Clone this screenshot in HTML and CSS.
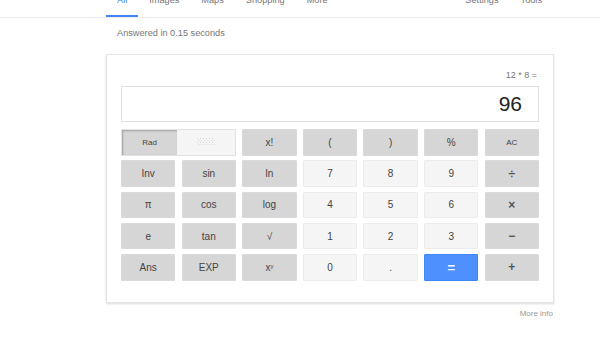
FILE: index.html
```html
<!DOCTYPE html>
<html lang="en">
<head>
  <meta charset="UTF-8" />
  <title>12 * 8 - Search</title>
  <link rel="stylesheet" href="styles.css">
</head>
<body>

<!-- Search tabs -->
<header class="tabs">
  <a class="tab active">All</a>
  <a class="tab">Images</a>
  <a class="tab">Maps</a>
  <a class="tab">Shopping</a>
  <a class="tab">More</a>
  <div class="tabs-right">
    <a class="tab">Settings</a>
    <a class="tab">Tools</a>
  </div>
</header>

<p class="answered">Answered in 0.15 seconds</p>

<!-- Calculator card -->
<div class="card">
  <div class="expr">12 * 8 =</div>
  <div class="display">96</div>

  <div class="keys">
    <div class="toggle">
      <div class="rad">Rad</div>
      <div class="deg">
        <svg width="18" height="8" viewBox="0 0 18 8">
          <g fill="#d4d4d4">
            <rect x="0" y="0" width="1" height="1"/><rect x="3" y="0" width="1" height="1"/><rect x="6" y="0" width="1" height="1"/><rect x="9" y="0" width="1" height="1"/><rect x="12" y="0" width="1" height="1"/><rect x="15" y="0" width="1" height="1"/>
            <rect x="1.5" y="2" width="1" height="1"/><rect x="4.5" y="2" width="1" height="1"/><rect x="7.5" y="2" width="1" height="1"/><rect x="10.5" y="2" width="1" height="1"/><rect x="13.5" y="2" width="1" height="1"/><rect x="16.5" y="2" width="1" height="1"/>
            <rect x="0" y="4" width="1" height="1"/><rect x="3" y="4" width="1" height="1"/><rect x="6" y="4" width="1" height="1"/><rect x="9" y="4" width="1" height="1"/><rect x="12" y="4" width="1" height="1"/><rect x="15" y="4" width="1" height="1"/>
            <rect x="1.5" y="6" width="1" height="1"/><rect x="4.5" y="6" width="1" height="1"/><rect x="7.5" y="6" width="1" height="1"/><rect x="10.5" y="6" width="1" height="1"/><rect x="13.5" y="6" width="1" height="1"/><rect x="16.5" y="6" width="1" height="1"/>
          </g>
        </svg>
      </div>
    </div>
    <div class="key fn">x!</div>
    <div class="key fn">(</div>
    <div class="key fn">)</div>
    <div class="key fn">%</div>
    <div class="key fn small">AC</div>

    <div class="key fn">Inv</div>
    <div class="key fn">sin</div>
    <div class="key fn">ln</div>
    <div class="key num">7</div>
    <div class="key num">8</div>
    <div class="key num">9</div>
    <div class="key fn op">÷</div>

    <div class="key fn">π</div>
    <div class="key fn">cos</div>
    <div class="key fn">log</div>
    <div class="key num">4</div>
    <div class="key num">5</div>
    <div class="key num">6</div>
    <div class="key fn op">×</div>

    <div class="key fn">e</div>
    <div class="key fn">tan</div>
    <div class="key fn">√</div>
    <div class="key num">1</div>
    <div class="key num">2</div>
    <div class="key num">3</div>
    <div class="key fn op">−</div>

    <div class="key fn">Ans</div>
    <div class="key fn">EXP</div>
    <div class="key fn">x<sup>y</sup></div>
    <div class="key num">0</div>
    <div class="key num">.</div>
    <div class="key eq">=</div>
    <div class="key fn op">+</div>
  </div>
</div>

<div class="more-info">More info</div>

</body>
</html>
```

FILE: styles.css
```css
* {
  box-sizing: border-box;
}

html, body {
  margin: 0;
  padding: 0;
  background: #fff;
  font-family: 'Liberation Sans', Arial, sans-serif;
  color: #222;
  width: 600px;
  height: 337px;
  overflow: hidden;
}

/* top tabs */
.tabs {
  display: flex;
  height: 18px;
  padding: 0 47px 0 106px;
  border-bottom: 1px solid #ebebeb;
}

.tab {
  display: block;
  margin-top: -5px;
  height: 22px;
  padding: 0 11px;
  font-size: 9.2px;
  line-height: 11px;
  color: #777;
  border-bottom: 2px solid transparent;
}

.tab.active {
  color: #4285f4;
  border-bottom-color: #4285f4;
}

.tabs-right {
  display: flex;
  margin-left: auto;
}

.answered {
  margin: 0;
  padding: 9px 0 0 117px;
  font-size: 9.2px;
  line-height: 12px;
  color: #777;
}

/* calculator */
.card {
  width: 448px;
  margin: 15px 0 0 106px;
  padding: 14px 14px 21px;
  border: 1px solid #e4e4e4;
  box-shadow: 0 1px 2px rgba(0, 0, 0, 0.15);
}

.expr {
  text-align: right;
  font-size: 9px;
  line-height: 12px;
  color: #777;
  padding-right: 2px;
}

.display {
  margin-top: 5px;
  height: 36px;
  border: 1px solid #e2e2e2;
  padding-right: 16px;
  text-align: right;
  font-size: 21px;
  line-height: 34px;
  color: #222;
}

.keys {
  margin-top: 7px;
  display: grid;
  grid-template-columns: repeat(7, 1fr);
  grid-auto-rows: 26.6px;
  gap: 4.7px 6.2px;
}

.key {
  display: flex;
  align-items: center;
  justify-content: center;
  border: 1px solid;
  border-radius: 1px;
  font-size: 10px;
  color: #444;
}

.key sup {
  font-size: 6px;
  line-height: 0;
  position: relative;
  top: -1px;
}

.fn {
  background: #d6d6d6;
  border-color: #d9d9d9;
}

.num {
  background: #f5f5f5;
  border-color: #ececec;
}

.eq {
  background: #4d90fe;
  border-color: #3f86f5;
  color: #fff;
  font-weight: bold;
  font-size: 13px;
}

.op {
  font-size: 12px;
  font-weight: bold;
  color: #555;
}

.small {
  font-size: 8px;
}

.toggle {
  grid-column: span 2;
  display: flex;
  border: 1px solid #e2e2e2;
}

.rad {
  width: 55px;
  display: flex;
  align-items: center;
  justify-content: center;
  background: #d6d6d6;
  box-shadow: inset 1px 1px 2px rgba(0, 0, 0, 0.25);
  font-size: 8px;
  color: #444;
}

.deg {
  flex: 1;
  display: flex;
  align-items: center;
  justify-content: center;
  background: #f5f5f5;
}

.more-info {
  width: 553px;
  padding-top: 6px;
  text-align: right;
  font-size: 8px;
  color: #999;
}
```
